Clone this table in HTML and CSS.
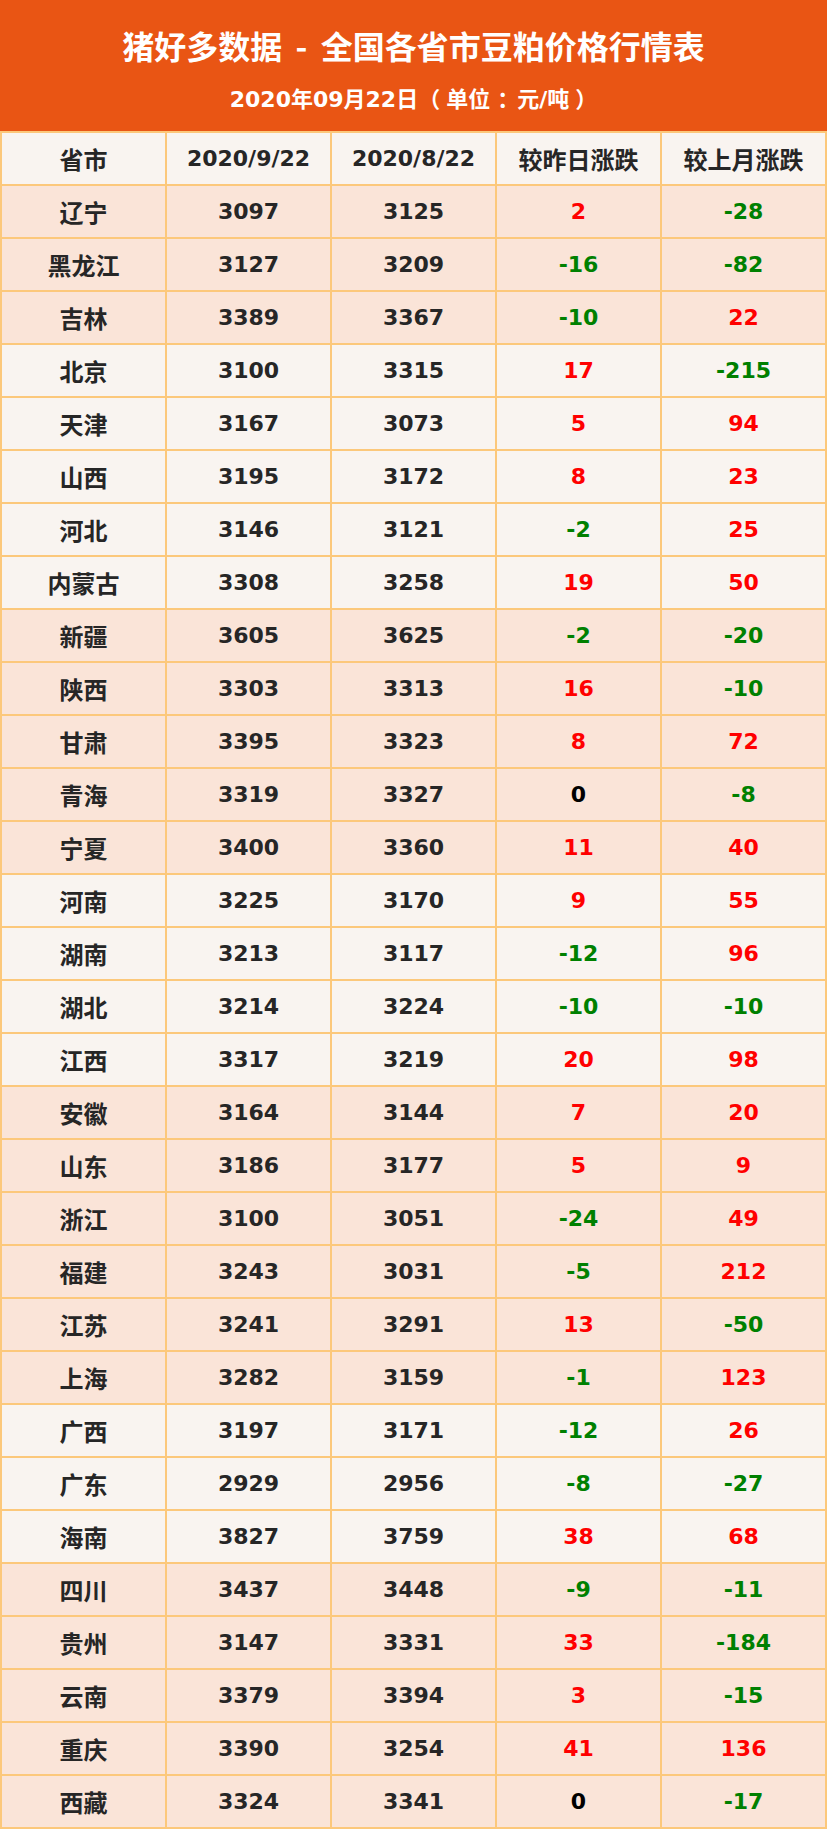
FILE: index.html
```html
<!DOCTYPE html>
<html lang="zh-CN">
<head>
<meta charset="utf-8">
<title>猪好多数据 - 全国各省市豆粕价格行情表</title>
<link rel="stylesheet" href="styles.css">
</head>
<body>
<div class="page">
  <header class="banner">
    <h1 class="title">猪好多数据 - 全国各省市豆粕价格行情表</h1>
    <p class="subtitle">2020年09月22日<span class="lp">（</span>单位<span class="colon">：</span>元/吨<span class="rp">）</span></p>
  </header>
  <div class="grid" id="grid">
    <div class="cell head cjk">省市</div>
    <div class="cell head">2020/9/22</div>
    <div class="cell head">2020/8/22</div>
    <div class="cell head cjk">较昨日涨跌</div>
    <div class="cell head cjk">较上月涨跌</div>
  </div>
</div>
<script src="script.js"></script>
</body>
</html>
```

FILE: script.js
```js
var rows = [
  ["辽宁",3097,3125,2,-28,1],
  ["黑龙江",3127,3209,-16,-82,1],
  ["吉林",3389,3367,-10,22,1],
  ["北京",3100,3315,17,-215,0],
  ["天津",3167,3073,5,94,0],
  ["山西",3195,3172,8,23,0],
  ["河北",3146,3121,-2,25,0],
  ["内蒙古",3308,3258,19,50,0],
  ["新疆",3605,3625,-2,-20,1],
  ["陕西",3303,3313,16,-10,1],
  ["甘肃",3395,3323,8,72,1],
  ["青海",3319,3327,0,-8,1],
  ["宁夏",3400,3360,11,40,1],
  ["河南",3225,3170,9,55,0],
  ["湖南",3213,3117,-12,96,0],
  ["湖北",3214,3224,-10,-10,0],
  ["江西",3317,3219,20,98,0],
  ["安徽",3164,3144,7,20,1],
  ["山东",3186,3177,5,9,1],
  ["浙江",3100,3051,-24,49,1],
  ["福建",3243,3031,-5,212,1],
  ["江苏",3241,3291,13,-50,1],
  ["上海",3282,3159,-1,123,1],
  ["广西",3197,3171,-12,26,0],
  ["广东",2929,2956,-8,-27,0],
  ["海南",3827,3759,38,68,0],
  ["四川",3437,3448,-9,-11,1],
  ["贵州",3147,3331,33,-184,1],
  ["云南",3379,3394,3,-15,1],
  ["重庆",3390,3254,41,136,1],
  ["西藏",3324,3341,0,-17,1]
];
var grid = document.getElementById("grid");
function cell(text, cls) {
  var d = document.createElement("div");
  d.className = "cell " + cls;
  d.textContent = text;
  grid.appendChild(d);
}
function sign(v) {
  return v > 0 ? "up" : (v < 0 ? "down" : "flat");
}
rows.forEach(function (r) {
  var tone = r[5] ? "peach" : "light";
  cell(r[0], tone + " cjk");
  cell(r[1], tone);
  cell(r[2], tone);
  cell(r[3], tone + " " + sign(r[3]));
  cell(r[4], tone + " " + sign(r[4]));
});
```

FILE: styles.css
```css
html, body {
  margin: 0;
  padding: 0;
  background: #ffffff;
}
.page {
  width: 827px;
  font-family: "DejaVu Sans", "Noto Sans CJK SC", sans-serif;
  font-weight: bold;
}
.banner {
  height: 131px;
  background: #e95514;
  color: #ffffff;
  box-sizing: border-box;
  padding-top: 24px;
  text-align: center;
}
.title {
  margin: 0;
  font-size: 32px;
  line-height: 42px;
  font-weight: bold;
  font-family: "Noto Sans CJK SC", sans-serif;
  word-spacing: 6px;
}
.subtitle {
  margin: 20px 0 0;
  font-size: 22px;
  line-height: 28px;
}
.lp {
  margin-right: 6px;
}
.rp {
  margin-left: 6px;
}
.colon {
  margin: 0 -2px 0 7px;
}
.grid {
  display: grid;
  grid-template-columns: repeat(5, 1fr);
  grid-auto-rows: 51px;
  gap: 2px;
  padding: 2px;
  background: #fcc87b;
}
.cell {
  display: flex;
  align-items: center;
  justify-content: center;
  font-size: 22px;
  color: #262626;
}
.cjk {
  font-size: 24px;
}
.head,
.light {
  background: #f9f4f0;
}
.peach {
  background: #fae4d8;
}
.up {
  color: #ff0000;
}
.down {
  color: #008000;
}
.flat {
  color: #000000;
}
```
